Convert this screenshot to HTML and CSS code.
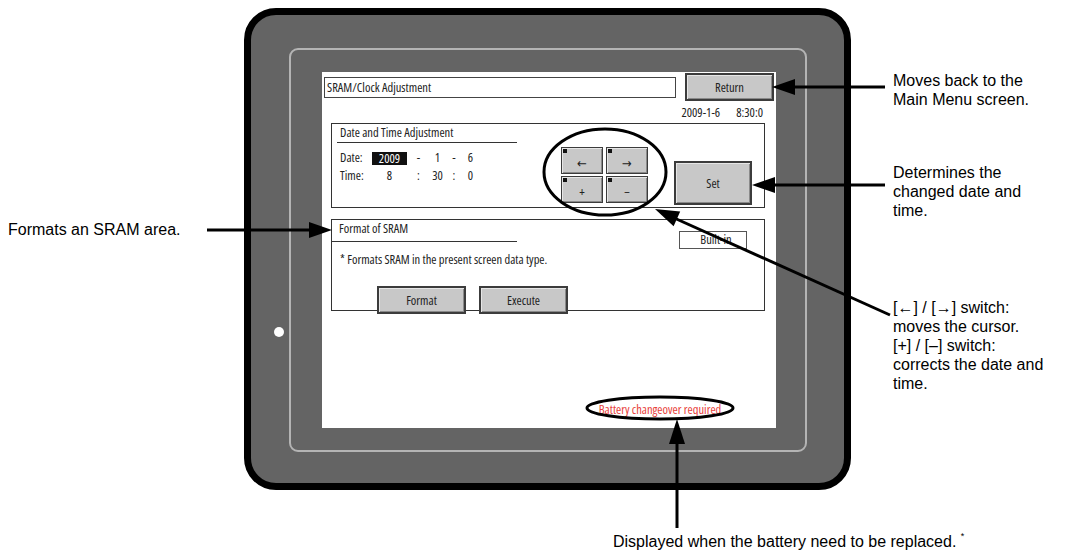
FILE: index.html
```html
<!DOCTYPE html>
<html lang="en">

<head>
    <meta charset="UTF-8">
    <meta name="viewport" content="width=device-width, initial-scale=1.0">
    <title>SRAM/Clock Adjustment</title>
    <link rel="stylesheet" href="styles.css">
</head>

<body>
    <div class="stage">
        <div class="device">
            <span class="led"></span>
            <div class="frame">
                <div class="screen">
                    <div class="head">
                        <div class="title-box">SRAM/Clock Adjustment</div>
                        <button class="key key-wide">Return</button>
                    </div>
                    <div class="clock"><span>2009-1-6</span><span>8:30:0</span></div>

                    <section class="panel panel-date">
                        <div class="panel-main">
                            <div class="panel-title">Date and Time Adjustment</div>
                            <div class="fields">
                                <span class="lbl">Date:</span><span class="cur">2009</span><span>-</span><span>1</span><span>-</span><span>6</span>
                                <span class="lbl">Time:</span><span>8</span><span>:</span><span>30</span><span>:</span><span>0</span>
                            </div>
                        </div>
                        <div class="pad">
                            <button class="key key-sm">&larr;</button>
                            <button class="key key-sm">&rarr;</button>
                            <button class="key key-sm">+</button>
                            <button class="key key-sm">&minus;</button>
                        </div>
                        <button class="key key-set">Set</button>
                    </section>

                    <section class="panel panel-sram">
                        <div class="panel-top">
                            <div class="panel-title">Format of SRAM</div>
                            <div class="tag">Built-in</div>
                        </div>
                        <p class="note">* Formats SRAM in the present screen data type.</p>
                        <div class="actions">
                            <button class="key key-wide">Format</button>
                            <button class="key key-wide">Execute</button>
                        </div>
                    </section>

                    <div class="alarm">Battery changeover required</div>
                </div>
            </div>
        </div>

        <!-- callout lines and rings -->
        <svg class="callouts" width="1067" height="557" viewBox="0 0 1067 557">
            <g fill="none" stroke="#000" stroke-width="3">
                <ellipse cx="605" cy="172" rx="61" ry="43" />
                <ellipse cx="660" cy="408" rx="73" ry="11" />
                <line x1="790" y1="87" x2="885" y2="87" />
                <line x1="770" y1="185" x2="885" y2="185" />
                <line x1="207" y1="230" x2="314" y2="230" />
                <line x1="677" y1="528" x2="677" y2="440" />
                <line x1="672" y1="217" x2="890" y2="315" />
            </g>
            <g fill="#000">
                <polygon points="772,87 795,79 795,95" />
                <polygon points="752,185 775,177 775,193" />
                <polygon points="332,230 309,222 309,238" />
                <polygon points="677,419 669,444 685,444" />
                <polygon points="655,209 673.6,226.2 680.2,211.6" />
            </g>
        </svg>

        <p class="callout c-return">Moves back to the<br>Main Menu screen.</p>
        <p class="callout c-set">Determines the<br>changed date and<br>time.</p>
        <p class="callout c-pad">[&larr;] / [&rarr;] switch:<br>moves the cursor.<br>[+] / [&ndash;] switch:<br>corrects the date and<br>time.</p>
        <p class="callout c-sram">Formats an SRAM area.</p>
        <p class="callout c-batt">Displayed when the battery need to be replaced. <sup>*</sup></p>
    </div>
</body>

</html>
```

FILE: styles.css
```css
body {
    margin: 0;
    background-color: #fff;
    font-family: "Liberation Sans", Arial, sans-serif;
    color: #000;
}

.stage {
    position: relative;
    width: 1067px;
    height: 557px;
    overflow: hidden;
}

/* device bezel */
.device {
    position: absolute;
    left: 244px;
    top: 8px;
    width: 607px;
    height: 482px;
    box-sizing: border-box;
    border: 7px solid #000;
    border-radius: 32px;
    background-color: #646464;
    padding: 33px 37px 31px 38px;
}

.led {
    position: absolute;
    left: 23px;
    top: 312px;
    width: 10px;
    height: 10px;
    border-radius: 50%;
    background-color: #fff;
}

.frame {
    height: 100%;
    box-sizing: border-box;
    border: 2px solid #b4b4b4;
    border-radius: 9px;
    padding: 22px 29px 22px 31px;
}

/* panel screen */
.screen {
    height: 100%;
    box-sizing: border-box;
    background-color: #fff;
    display: flex;
    flex-direction: column;
    padding: 1px 2px 0;
    font-family: "Open Sans", "DejaVu Sans Condensed", sans-serif;
    font-stretch: 75%;
    font-size: 12.5px;
    color: #222;
}

.head {
    display: flex;
    align-items: center;
    gap: 9px;
}

.title-box {
    width: 352px;
    height: 21px;
    box-sizing: border-box;
    border: 1px solid #444;
    padding-left: 2px;
    line-height: 19px;
}

.key {
    position: relative;
    box-sizing: border-box;
    padding: 0;
    font: inherit;
    color: #222;
    background-color: #c8c8c8;
    border: 2px solid #3c3c3c;
    box-shadow: inset 1px 1px 0 #e6e6e6, inset -1px -1px 0 #8a8a8a;
}

.key-wide {
    width: 89px;
    height: 28px;
}

.clock {
    display: flex;
    justify-content: flex-end;
    gap: 16px;
    margin-top: 5px;
    padding-right: 11px;
    line-height: 14px;
}

.panel {
    margin: 3px 9px 0 7px;
    border: 1px solid #333;
    box-sizing: border-box;
}

.panel-title {
    box-sizing: border-box;
    line-height: 14px;
    border-bottom: 1px solid #333;
}

/* date and time */
.panel-date {
    height: 85px;
    display: flex;
    align-items: flex-start;
    padding-left: 5px;
}

.panel-date .panel-title {
    width: 180px;
    padding: 2px 0 2px 3px;
}

.fields {
    display: grid;
    grid-template-columns: 32px 35px 23px 15px 18px 15px;
    grid-auto-rows: 18px;
    margin: 6px 0 0 3px;
    line-height: 18px;
    text-align: center;
}

.fields .lbl {
    text-align: left;
}

.fields .cur {
    align-self: center;
    height: 13px;
    line-height: 13px;
    background-color: #111;
    color: #fff;
}

.pad {
    display: grid;
    grid-template-columns: 42px 42px;
    grid-auto-rows: 27px;
    gap: 2px 3px;
    margin: 23px 0 0 44px;
}

.key-sm {
    border-width: 1px;
    font-size: 13px;
    padding-top: 4px;
}

.key-sm::before {
    content: "";
    position: absolute;
    left: 1px;
    top: 1px;
    width: 4px;
    height: 4px;
    background-color: #111;
}

.key-set {
    width: 78px;
    height: 44px;
    margin: 37px 0 0 26px;
}

/* sram */
.panel-sram {
    height: 92px;
    margin-top: 11px;
}

.panel-top {
    display: flex;
    align-items: flex-start;
}

.panel-sram .panel-title {
    width: 185px;
    padding: 2px 0 5px 7px;
}

.tag {
    width: 68px;
    height: 18px;
    box-sizing: border-box;
    margin: 11px 17px 0 auto;
    border: 1px solid #555;
    line-height: 16px;
    text-align: center;
    padding-left: 6px;
}

.note {
    margin: 4px 0 0 8px;
    line-height: 14px;
}

.actions {
    display: flex;
    gap: 13px;
    margin: 19px 0 0 45px;
}

.alarm {
    width: 160px;
    margin: auto 0 11px 256px;
    line-height: 14px;
    text-align: center;
    color: #e8413a;
}

/* callouts */
.callouts {
    position: absolute;
    left: 0;
    top: 0;
    pointer-events: none;
}

.callout {
    position: absolute;
    margin: 0;
    font-size: 16px;
    line-height: 19px;
    white-space: nowrap;
}

.callout sup {
    font-size: 9px;
    vertical-align: 8px;
}

.c-return {
    left: 893px;
    top: 71px;
}

.c-set {
    left: 893px;
    top: 163px;
}

.c-pad {
    left: 893px;
    top: 298px;
}

.c-sram {
    left: 8px;
    top: 220px;
}

.c-batt {
    left: 613px;
    top: 527px;
}
```
